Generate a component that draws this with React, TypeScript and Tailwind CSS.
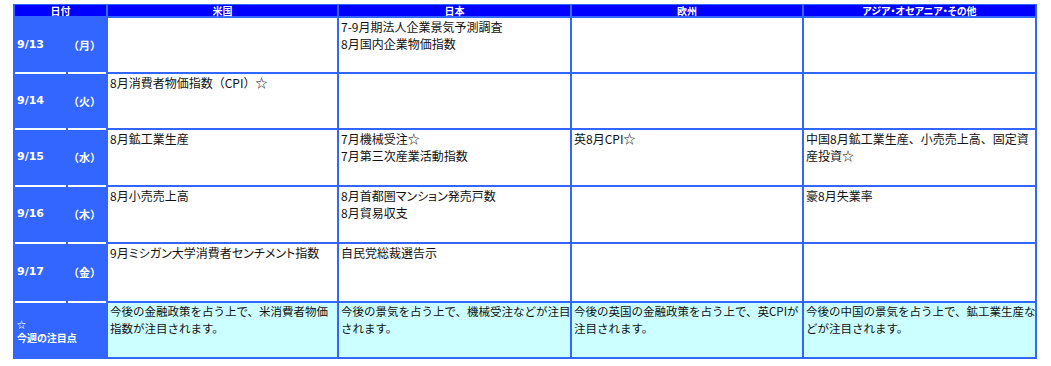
const jp = "font-['Noto_Sans_CJK_JP',sans-serif]"

const heads = ['米国', '日本', '欧州', 'アジア・オセアニア・その他']

type Row = { date: string; day: string; cells: string[][] }

const rows: Row[] = [
  { date: '9/13', day: '（月）', cells: [[], ['7-9月期法人企業景気予測調査', '8月国内企業物価指数'], [], []] },
  { date: '9/14', day: '（火）', cells: [['8月消費者物価指数（CPI）☆'], [], [], []] },
  {
    date: '9/15',
    day: '（水）',
    cells: [['8月鉱工業生産'], ['7月機械受注☆', '7月第三次産業活動指数'], ['英8月CPI☆'], ['中国8月鉱工業生産、小売売上高、固定資', '産投資☆']],
  },
  { date: '9/16', day: '（木）', cells: [['8月小売売上高'], ['8月首都圏マンション発売戸数', '8月貿易収支'], [], ['豪8月失業率']] },
  { date: '9/17', day: '（金）', cells: [['9月ミシガン大学消費者センチメント指数'], ['自民党総裁選告示'], [], []] },
]

const notes = [
  ['今後の金融政策を占う上で、米消費者物価', '指数が注目されます。'],
  ['今後の景気を占う上で、機械受注などが注目', 'されます。'],
  ['今後の英国の金融政策を占う上で、英CPIが', '注目されます。'],
  ['今後の中国の景気を占う上で、鉱工業生産な', 'どが注目されます。'],
]

// katakana runs are set proportional, like the original page font
function Kana({ text }: { text: string }) {
  const parts = text.split(/([ァ-ヶー]+)/)
  return (
    <>
      {parts.map((p, i) =>
        /^[ァ-ヶー]+$/.test(p) ? (
          <span key={i} className="[font-feature-settings:'palt']">
            {p}
          </span>
        ) : (
          p
        ),
      )}
    </>
  )
}

function Lines({ lines }: { lines: string[] }) {
  return (
    <>
      {lines.map((l, i) => (
        <div key={i} className="whitespace-nowrap">
          <Kana text={l} />
        </div>
      ))}
    </>
  )
}

export default function App() {
  return (
    <div className="w-[1051px] h-[366px] bg-white pt-[4px] pl-[13px]">
      <div className="grid w-[1024px] grid-cols-[91px_229px_231px_230px_231px] grid-rows-[11px_54px_54px_55px_55px_57px_54px] gap-[2px] bg-[#3366ff] border-[#3366ff] border-t border-x-2 border-b-2">
        {/* Header */}
        <div className={`bg-[#0000ff] text-white font-bold text-[10px] leading-[11px] flex items-center justify-center ${jp} [font-feature-settings:'palt']`}>
          日付
        </div>
        {heads.map((h) => (
          <div
            key={h}
            className={`bg-[#0000ff] text-white font-bold text-[10px] leading-[11px] flex items-center justify-center ${jp} [font-feature-settings:'palt']`}
          >
            {h}
          </div>
        ))}

        {/* Days */}
        {rows.map((r) => (
          <>
            <div key={r.date + 'd'} className="grid grid-cols-[51px_38px] gap-x-[2px]">
              <div className="flex items-center pl-[2px] shadow-[0_2px_0_#fff] text-white font-bold text-[11px] font-['DejaVu_Sans',sans-serif]">
                {r.date}
              </div>
              <div className={`flex items-center shadow-[0_2px_0_#fff] text-white font-bold text-[11px] ${jp}`}>{r.day}</div>
            </div>
            {r.cells.map((c, i) => (
              <div key={r.date + i} className={`bg-white pl-[2px] text-[12px] leading-[17px] text-[#111] ${jp}`}>
                <Lines lines={c} />
              </div>
            ))}
          </>
        ))}

        {/* Weekly notes */}
        <div className={`flex flex-col justify-center pl-[2px] pt-[1px] text-white font-bold text-[10px] leading-[13px] ${jp} [font-feature-settings:'palt']`}>
          <div className="text-[9px]">☆</div>
          <div>今週の注目点</div>
        </div>
        {notes.map((n, i) => (
          <div key={'n' + i} className={`bg-[#ccffff] pl-[2px] text-[11.5px] leading-[17px] text-[#111] ${jp}`}>
            <Lines lines={n} />
          </div>
        ))}
      </div>
    </div>
  )
}
